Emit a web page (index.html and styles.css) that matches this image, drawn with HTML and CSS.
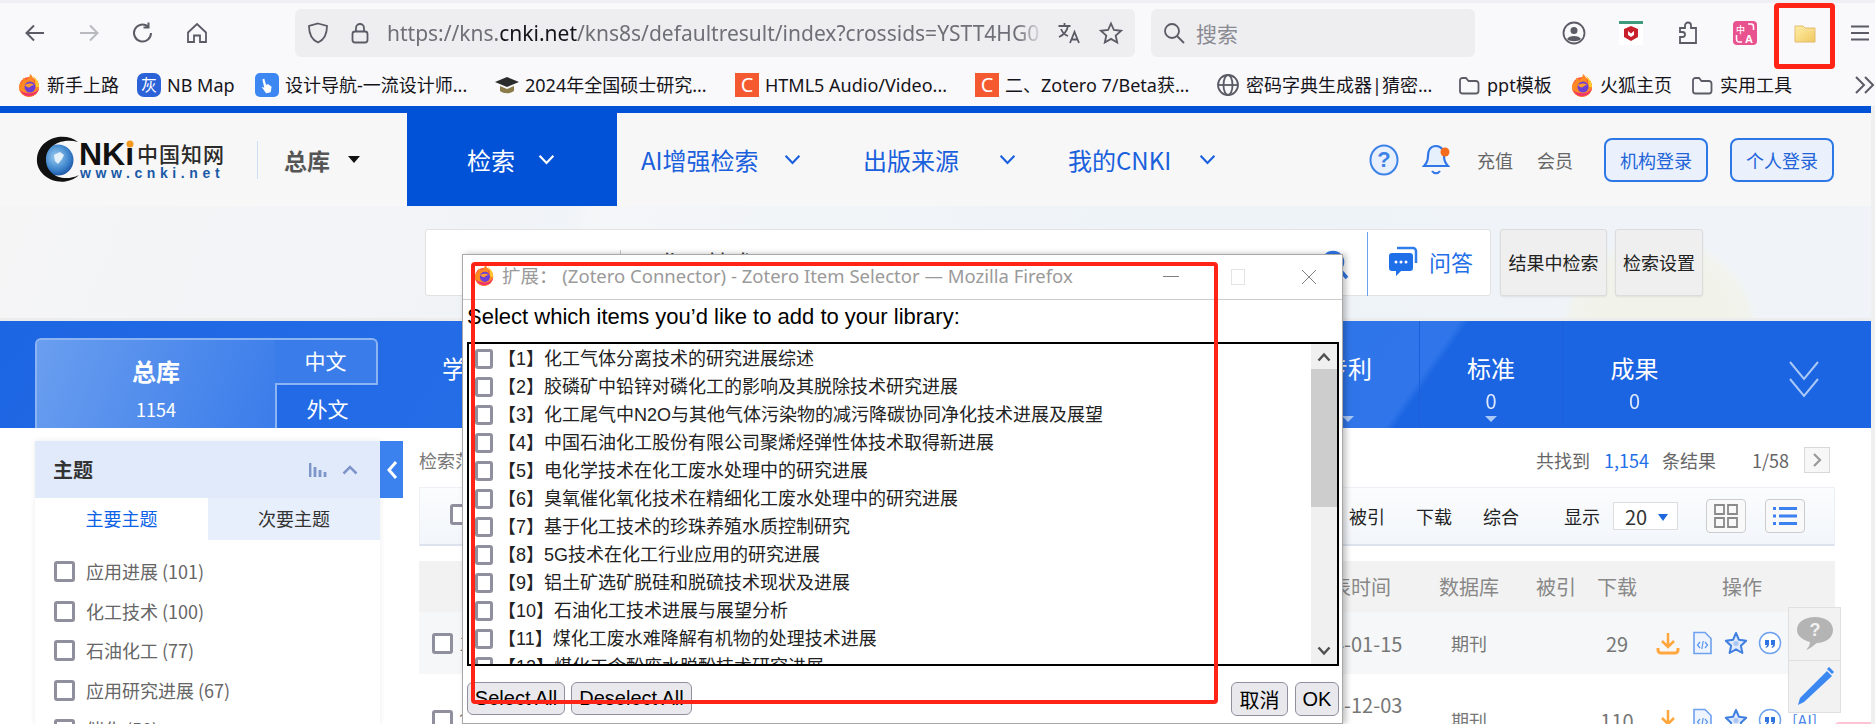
FILE: index.html
```html
<!DOCTYPE html>
<html lang="zh">
<head>
<meta charset="utf-8">
<title>CNKI</title>
<link rel="stylesheet" href="styles.css">
</head>
<body>
<svg class="defs" width="0" height="0">
  <defs>
    <symbol id="fox" viewBox="0 0 24 24">
      <circle cx="12" cy="14" r="10" fill="#ff5a36"/>
      <path d="M2 14a10 10 0 0 0 20 0c0-3-1-5-2-7-1 2-2 3-3 3 0-3-1-7-4-9 0 3-2 5-4 6-1-1-2-2-3-2 0 2 0 3-1 4-2 1-3 3-3 5z" fill="#ff8a24"/>
      <path d="M16 3c3 2 6 6 6 11h-3c0-4-1-8-3-11z" fill="#ffc92e"/>
      <path d="M3 17c2 4 6 7 10 6 4 0 8-3 9-8-2 4-7 6-11 5-3 0-6-1-8-3z" fill="#f0356b"/>
      <circle cx="13" cy="14" r="5.5" fill="#6d3fd6"/>
      <path d="M8 12c3-2 7-2 9 0-2 0-3 1-4 2s-4 0-5-2z" fill="#ff9c2e"/>
    </symbol>
    <symbol id="folder" viewBox="0 0 24 24">
      <path d="M3 7.500A2.500 2.500 0 0 1 5.500 5H9l2.500 3H19a2.500 2.500 0 0 1 2.500 2.500V18a2.500 2.500 0 0 1-2.500 2.500H5.500A2.500 2.500 0 0 1 3 18z" fill="none" stroke="#5b5b66" stroke-width="1.800"/>
    </symbol>
    <symbol id="chev" viewBox="0 0 16 10">
      <path d="M1.500 1.500 8 8.200l6.500-6.700" fill="none" stroke="currentColor" stroke-width="2"/>
    </symbol>
    <symbol id="dl" viewBox="0 0 24 24">
      <path d="M12 2v13M6 10l6 6 6-6" fill="none" stroke="#ffa63d" stroke-width="2.500"/>
      <path d="M2 17v2a3 3 0 0 0 3 3h14a3 3 0 0 0 3-3v-2" fill="none" stroke="#ffa63d" stroke-width="3"/>
    </symbol>
    <symbol id="doc" viewBox="0 0 24 24">
      <path d="M4 1.500h11l6 6v15H4z" fill="#eef4fe" stroke="#6ea1ee" stroke-width="1.600"/>
      <path d="M10 11l-2.500 3 2.500 3M15 11l2.500 3-2.500 3M13.200 10l-1.400 8" fill="none" stroke="#5b95ee" stroke-width="1.200"/>
    </symbol>
    <symbol id="star" viewBox="0 0 24 24">
      <path d="M12 2l3 6.800 7.200.9-5.300 5 1.500 7.300-6.400-3.700L5.600 22l1.500-7.300-5.300-5L9 8.800z" fill="#dfe9fb" stroke="#3f7fe0" stroke-width="2" stroke-linejoin="round"/>
      <circle cx="12" cy="12.500" r="2.500" fill="#a9c5f2"/>
    </symbol>
    <symbol id="quote" viewBox="0 0 24 24">
      <circle cx="12" cy="12" r="10.500" fill="#fff" stroke="#6ea1ee" stroke-width="1.500"/>
      <path d="M7 9h4v4c0 2-1 3-3 4l-.5-1c1-.5 1.500-1.200 1.500-2H7zM13 9h4v4c0 2-1 3-3 4l-.5-1c1-.5 1.500-1.200 1.500-2h-2z" fill="#2f73e0"/>
    </symbol>
  </defs>
</svg>
<div class="app">
  <div class="strip"></div>

  <div class="toolbar">
    <div class="tb-btn"><svg class="i24" viewBox="0 0 24 24"><path d="M21 12H4M11 4.500 3.500 12l7.500 7.500" class="st"/></svg></div>
    <div class="tb-btn"><svg class="i24" viewBox="0 0 24 24"><path d="M3 12h17M13 4.500l7.500 7.500-7.500 7.500" class="st st-dim"/></svg></div>
    <div class="tb-btn"><svg class="i24" viewBox="0 0 24 24"><path d="M20 12a8.500 8.500 0 1 1-3-6.500M17.500 1.500v5h-5" class="st"/></svg></div>
    <div class="tb-btn"><svg class="i24" viewBox="0 0 24 24"><path d="M3 11.500 12 3l9 8.500V21h-6v-6.500H9V21H3z" class="st st-thin"/></svg></div>
    <div class="urlbar">
      <svg class="i24 shield" viewBox="0 0 24 24"><path d="M12 2.500 21 5c0 8-2 13.500-9 16.500C5 18.500 3 13 3 5z" class="st st-thin"/></svg>
      <svg class="i24 lock" viewBox="0 0 24 24"><rect x="4.500" y="10.500" width="15" height="11" rx="2.500" class="st st-thin"/><path d="M8 10.500V7a4 4 0 0 1 8 0v3.500" class="st st-thin"/></svg>
      <div class="url"><span>https://kns.</span><b>cnki.net</b><span>/kns8s/defaultresult/index?crossids=YSTT4HG0</span></div>
      <svg class="i24 trans" viewBox="0 0 24 24"><path d="M1.500 5h12M7.500 2v3M11 5c-1 5-4.500 9-9 11M4 8c1.500 3.500 4 6 7 7" class="st st-thin"/><path d="M13 22l4.500-11L22 22M14.500 18.500h6" class="st st-thin"/></svg>
      <svg class="i24 star-btn" viewBox="0 0 24 24"><path d="M12 2.500l2.900 6.500 7.100.8-5.300 4.700 1.500 7-6.200-3.600-6.200 3.600 1.500-7L2 9.800l7.100-.8z" class="st st-thin"/></svg>
    </div>
    <div class="searchbar">
      <svg class="i24" viewBox="0 0 24 24"><circle cx="10" cy="10" r="7" class="st st-thin"/><path d="M15 15l7 7" class="st st-thin"/></svg>
      <span>搜索</span>
    </div>
    <div class="tb-right">
      <div class="tr-btn"><svg class="i24" viewBox="0 0 24 24"><circle cx="12" cy="12" r="10.500" class="st st-thin"/><circle cx="12" cy="9.500" r="3.500" fill="#5b5b66"/><path d="M5 18c2-4 12-4 14 0-3 3-11 3-14 0z" fill="#5b5b66"/></svg></div>
      <div class="tr-btn"><svg class="i24 mc" viewBox="0 0 24 24"><rect x="0" y="3" width="24" height="21" fill="#fff"/><rect x="0" y="0" width="24" height="3" fill="#3f9b7d"/><path d="M5 8l7-3 7 3v8l-7 4-7-4zM9 10v4l3 2 3-2v-4l-3 2.500z" fill="#c8202c" fill-rule="evenodd"/></svg></div>
      <div class="tr-btn"><svg class="i24" viewBox="0 0 24 24"><path d="M9 4.500a3 3 0 0 1 6 0V7h5v15H4v-6h2.500a2.500 2.500 0 0 0 0-5H4V7h5z" class="st st-thin"/></svg></div>
      <div class="tr-btn"><svg class="i24" viewBox="0 0 24 24"><rect width="24" height="24" rx="4" fill="#e8538f"/><text class="pt-cn" x="3" y="11.500">中</text><text class="pt-a" x="12" y="21.500">A</text><path d="M15 3h3a2.500 2.500 0 0 1 2.500 2.500V9M9 21H6a2.500 2.500 0 0 1-2.500-2.500V14" fill="none" stroke="#fff" stroke-width="1.500"/></svg></div>
      <div class="tr-btn tr-folder"><svg class="i24" viewBox="0 0 24 24"><defs><linearGradient id="fg" x1="0" y1="0" x2="1" y2="1"><stop offset="0" stop-color="#fff0a8"/><stop offset="1" stop-color="#f0c860"/></linearGradient></defs><path d="M2 5h8l2 2h10v14H2z" fill="url(#fg)" stroke="#e2bb6c"/><path d="M2 9h20" stroke="#f6dd94"/></svg></div>
      <div class="tr-btn tr-menu"><svg class="i24" viewBox="0 0 24 24"><path d="M3 5.500h18M3 12h18M3 18.500h18" class="st"/></svg></div>
    </div>
  </div>

  <div class="bookmarks">
    <div class="bm"><svg class="i24"><use href="#fox"/></svg><span>新手上路</span></div>
    <div class="bm"><span class="bi bi-blue">灰</span><span>NB Map</span></div>
    <div class="bm"><span class="bi bi-hand"><svg viewBox="0 0 24 24"><path d="M9 5l2 7 2-1 4 3-1 6-5 1-5-7 3 1-2-9z" fill="#fff"/></svg></span><span>设计导航-一流设计师...</span></div>
    <div class="bm"><svg class="i24" viewBox="0 0 24 24"><path d="M0 9l12-5 12 5-12 5z" fill="#2b2b2b"/><path d="M5 13v5c4 3 10 3 14 0v-5l-7 3z" fill="#8b7b4a"/></svg><span>2024年全国硕士研究...</span></div>
    <div class="bm"><span class="bi bi-c">C</span><span>HTML5 Audio/Video...</span></div>
    <div class="bm"><span class="bi bi-c">C</span><span>二、Zotero 7/Beta获...</span></div>
    <div class="bm"><svg class="i24" viewBox="0 0 24 24"><circle cx="12" cy="12" r="10" class="st st-thin"/><ellipse cx="12" cy="12" rx="4.500" ry="10" class="st st-thin"/><path d="M2 12h20" class="st st-thin"/></svg><span>密码字典生成器|猜密...</span></div>
    <div class="bm"><svg class="i24"><use href="#folder"/></svg><span>ppt模板</span></div>
    <div class="bm"><svg class="i24"><use href="#fox"/></svg><span>火狐主页</span></div>
    <div class="bm"><svg class="i24"><use href="#folder"/></svg><span>实用工具</span></div>
    <div class="bm bm-more"><svg class="i24" viewBox="0 0 24 24"><path d="M3 4l8 8-8 8M12 4l8 8-8 8" class="st"/></svg></div>
  </div>

  <div class="viewport">
    <div class="page">
      <div class="nav">
        <div class="brand">
          <svg class="logo" viewBox="0 0 200 60">
            <defs><radialGradient id="gl" cx=".45" cy=".4" r=".7"><stop offset="0" stop-color="#9fd0f2"/><stop offset=".6" stop-color="#3d84cc"/><stop offset="1" stop-color="#0f3f95"/></radialGradient></defs>
            <circle cx="28" cy="30" r="15.500" fill="url(#gl)"/>
            <path d="M24 25l6-3 4 3-2 4-4 5-3-3z" fill="#e4f1fb"/>
            <path d="M48 12C36 2 10 6 7 28c-2 20 26 32 42 17-16 8-34 0-33-17C17 14 34 8 48 12z" fill="#111"/>
            <text class="lg-nki" x="49" y="35">NKi</text>
            <circle cx="100" cy="14" r="3.500" fill="#f39a1e"/>
            <text class="lg-cn" x="107" y="32">中国知网</text>
            <text class="lg-www" x="50" y="48">www.cnki.net</text>
          </svg>
          <div class="brand-sep"></div>
          <div class="brand-db">总库</div>
          <div class="brand-caret"></div>
        </div>
        <div class="nav-item nav-on"><span>检索</span><svg class="nchev"><use href="#chev"/></svg></div>
        <div class="nav-link nl-ai"><span>AI增强检索</span><svg class="nchev"><use href="#chev"/></svg></div>
        <div class="nav-link nl-pub"><span>出版来源</span><svg class="nchev"><use href="#chev"/></svg></div>
        <div class="nav-link nl-my"><span>我的CNKI</span><svg class="nchev"><use href="#chev"/></svg></div>
        <div class="nav-right">
          <svg class="help" viewBox="0 0 30 32"><ellipse cx="15" cy="16" rx="13.500" ry="14.500" fill="#e9f0fd" stroke="#3d82e6" stroke-width="2"/><text class="help-q" x="15" y="23">?</text></svg>
          <svg class="bell" viewBox="0 0 28 34"><path d="M14 3c-6 0-8 5-8 10 0 6-2 8-4 10h24c-2-2-4-4-4-10 0-5-2-10-8-10z" fill="#e6effc" stroke="#2f76e6" stroke-width="2.200"/><path d="M10 28c2 3 6 3 8 0" fill="none" stroke="#2f76e6" stroke-width="2"/><circle cx="23" cy="9" r="4.500" fill="#f56c1d"/></svg>
          <span class="nr-text nr-a">充值</span>
          <span class="nr-text nr-b">会员</span>
          <span class="login login-a">机构登录</span>
          <span class="login login-b">个人登录</span>
        </div>
      </div>

      <div class="search-band">
        <div class="search-box">
          <div class="sb-field"><span>化工技术</span></div>
          <svg class="sb-mag" viewBox="0 0 28 30"><circle cx="12" cy="12" r="9.500" fill="none" stroke="#2f76e6" stroke-width="3.500"/><path d="M19 20l7 8" stroke="#2f76e6" stroke-width="3.500"/></svg>
          <div class="sb-ask">
            <svg class="ask-ic" viewBox="0 0 30 32"><path d="M9 3h16a3 3 0 0 1 3 3v12" fill="none" stroke="#2f7cec" stroke-width="2.500"/><path d="M4 8h18a3 3 0 0 1 3 3v12a3 3 0 0 1-3 3H13l-5 5v-5H4a3 3 0 0 1-3-3V11a3 3 0 0 1 3-3z" fill="#1f6fe8"/><circle cx="8" cy="17" r="1.500" fill="#fff"/><circle cx="13" cy="17" r="1.500" fill="#fff"/><circle cx="18" cy="17" r="1.500" fill="#fff"/></svg>
            <span>问答</span>
          </div>
        </div>
        <div class="sb-btn sb-btn-a">结果中检索</div>
        <div class="sb-btn sb-btn-b">检索设置</div>
      </div>

      <div class="tab-band">
        <div class="total">
          <div class="total-main"><b>总库</b><span>1154</span></div>
          <div class="total-cn">中文</div>
          <div class="total-en">外文</div>
        </div>
        <div class="tabs">
          <div class="tab"><b>学术期刊</b></div>
          <div class="tab"></div>
          <div class="tab"></div>
          <div class="tab"></div>
          <div class="tab"></div>
          <div class="tab"></div>
          <div class="tab tab-tri"><b>专利</b></div>
          <div class="tab tab-tri"><b>标准</b><span>0</span></div>
          <div class="tab"><b>成果</b><span>0</span></div>
        </div>
        <svg class="more-chev" viewBox="0 0 34 38"><path d="M3 2l14 17L31 2M3 19l14 17 14-17" fill="none" stroke="#a9c8f6" stroke-width="2"/></svg>
      </div>

      <div class="content">
        <aside class="side">
          <div class="side-head">
            <b>主题</b>
            <svg class="bars" viewBox="0 0 18 14"><path d="M1 0v14M6 4v10M11 7v7M16 9v5" stroke="#7d95c8" stroke-width="2.800"/></svg>
            <svg class="up" viewBox="0 0 16 10"><path d="M1.500 8.500 8 2l6.500 6.500" fill="none" stroke="#7d95c8" stroke-width="2.500"/></svg>
          </div>
          <div class="side-tabs"><div class="st-on">主要主题</div><div class="st-off">次要主题</div></div>
          <div class="side-list">
            <div class="side-row"><i class="cb cb-l"></i><span>应用进展 (101)</span></div>
            <div class="side-row"><i class="cb cb-l"></i><span>化工技术 (100)</span></div>
            <div class="side-row"><i class="cb cb-l"></i><span>石油化工 (77)</span></div>
            <div class="side-row"><i class="cb cb-l"></i><span>应用研究进展 (67)</span></div>
            <div class="side-row"><i class="cb cb-l"></i><span>催化 (50)</span></div>
          </div>
        </aside>
        <div class="collapse"><svg viewBox="0 0 12 20"><path d="M10 2 3 10l7 8" fill="none" stroke="#fff" stroke-width="3"/></svg></div>
        <main class="results">
          <div class="res-top">
            <span class="crumb">检索范围：总库</span>
            <span class="found">共找到</span><span class="found-n">1,154</span><span class="found">条结果</span>
            <span class="pg">1/58</span>
            <span class="pg-next"><svg viewBox="0 0 10 16"><path d="M2 2l6 6-6 6" fill="none" stroke="#999" stroke-width="2.200"/></svg></span>
          </div>
          <div class="res-tools">
            <i class="cb cb-l cb-tool"></i>
            <span class="rt rt-first">被引</span><span class="rt">下载</span><span class="rt">综合</span>
            <span class="rt rt-show">显示</span>
            <span class="sel">20<i></i></span>
            <span class="vbtn vbtn-grid"><svg viewBox="0 0 24 24"><path d="M1 1h9v9H1zM14 1h9v9h-9zM1 14h9v9H1zM14 14h9v9h-9z" fill="none" stroke="#8a8a8a" stroke-width="1.800"/></svg></span>
            <span class="vbtn vbtn-list"><svg viewBox="0 0 24 20"><path d="M0 2.500h3M6 2.500h18M0 10h3M6 10h18M0 17.500h3M6 17.500h18" stroke="#3b82f0" stroke-width="3"/></svg></span>
          </div>
          <div class="row row-head">
            <span></span><span></span><span>发表时间</span><span>数据库</span><span>被引</span><span>下载</span><span>操作</span>
          </div>
          <div class="row row-a">
            <i class="cb cb-l cb-row"></i>
            <span class="r-title">1</span><span class="r-date">2024-01-15</span><span>期刊</span><span></span><span class="r-num">29</span>
            <span class="ops">
              <svg class="op"><use href="#dl"/></svg><svg class="op"><use href="#doc"/></svg><svg class="op"><use href="#star"/></svg><svg class="op"><use href="#quote"/></svg>
            </span>
          </div>
          <div class="row row-b">
            <i class="cb cb-l cb-row"></i>
            <span class="r-title">2</span><span class="r-date r-date-top">2023-12-03</span><span>期刊</span><span></span><span class="r-num">110</span>
            <span class="ops">
              <svg class="op"><use href="#dl"/></svg><svg class="op"><use href="#doc"/></svg><svg class="op"><use href="#star"/></svg><svg class="op"><use href="#quote"/></svg><em>[AI]</em>
            </span>
          </div>
        </main>
      </div>
    </div>
    <div class="page-scroll"></div>
  </div>

  <div class="float">
    <div class="fl-cell"><svg viewBox="0 0 40 36"><path d="M20 1c10 0 18 5 18 13s-8 13-16 13c-3 2-7 6-11 7 2-2 4-5 4-8C8 24 2 20 2 14 2 6 10 1 20 1z" fill="#b4b4b4"/><text class="fl-q" x="20" y="20">?</text></svg></div>
    <div class="fl-cell"><svg viewBox="0 0 40 40"><path d="M32 4l5 5L9 35l-6 3 2-7z" fill="#3b88f2"/><path d="M33 1l5 5" stroke="#3b88f2" stroke-width="3"/></svg></div>
  </div>
  <div class="pink-edge"></div>

  <section class="dialog">
    <div class="dlg-title">
      <svg class="dlg-fox"><use href="#fox"/></svg>
      <span class="dlg-name">扩展： (Zotero Connector) - Zotero Item Selector — Mozilla Firefox</span>
      <span class="wc wc-min"></span><span class="wc wc-max"></span>
      <svg class="wc-close" viewBox="0 0 16 16"><path d="M1 1l14 14M15 1 1 15" stroke="#808080"/></svg>
    </div>
    <div class="dlg-body">
      <p class="dlg-q">Select which items you’d like to add to your library:</p>
      <div class="dlg-list">
        <div class="items">
          <label class="item"><i class="cb"></i><span>【1】化工气体分离技术的研究进展综述</span></label>
          <label class="item"><i class="cb"></i><span>【2】胶磷矿中铅锌对磷化工的影响及其脱除技术研究进展</span></label>
          <label class="item"><i class="cb"></i><span>【3】化工尾气中N2O与其他气体污染物的减污降碳协同净化技术进展及展望</span></label>
          <label class="item"><i class="cb"></i><span>【4】中国石油化工股份有限公司聚烯烃弹性体技术取得新进展</span></label>
          <label class="item"><i class="cb"></i><span>【5】电化学技术在化工废水处理中的研究进展</span></label>
          <label class="item"><i class="cb"></i><span>【6】臭氧催化氧化技术在精细化工废水处理中的研究进展</span></label>
          <label class="item"><i class="cb"></i><span>【7】基于化工技术的珍珠养殖水质控制研究</span></label>
          <label class="item"><i class="cb"></i><span>【8】5G技术在化工行业应用的研究进展</span></label>
          <label class="item"><i class="cb"></i><span>【9】铝土矿选矿脱硅和脱硫技术现状及进展</span></label>
          <label class="item"><i class="cb"></i><span>【10】石油化工技术进展与展望分析</span></label>
          <label class="item"><i class="cb"></i><span>【11】煤化工废水难降解有机物的处理技术进展</span></label>
          <label class="item"><i class="cb"></i><span>【12】煤化工含酚废水脱酚技术研究进展</span></label>
        </div>
        <div class="sbar">
          <svg class="sb-arrow" viewBox="0 0 14 10"><path d="M1.500 8.500 7 2.500l5.500 6" fill="none" stroke="#505050" stroke-width="2.500"/></svg>
          <div class="sb-thumb"></div>
          <svg class="sb-arrow sb-arrow-d" viewBox="0 0 14 10"><path d="M1.500 1.500 7 7.500l5.500-6" fill="none" stroke="#505050" stroke-width="2.500"/></svg>
        </div>
      </div>
      <div class="dlg-btns">
        <button class="btn btn-sel">Select All</button>
        <button class="btn btn-des">Deselect All</button>
        <button class="btn btn-cancel">取消</button>
        <button class="btn btn-ok">OK</button>
      </div>
    </div>
  </section>

  <div class="red red-folder"></div>
  <div class="red red-dialog"></div>
</div>
</body>
</html>
```
FILE: styles.css
```css
* { box-sizing: border-box; }
html, body { margin: 0; padding: 0; height: 100%; overflow: hidden; background: #fff; }
body { font-family: "Noto Sans CJK SC", "Noto Sans", sans-serif; color: #333; }
.defs { position: absolute; }
.app { position: relative; width: 1875px; height: 724px; overflow: hidden; }
.i24 { width: 24px; height: 24px; flex: none; display: block; }
.st { fill: none; stroke: #5b5b66; stroke-width: 2; }
.st-thin { stroke-width: 1.800; }
.st-dim { stroke: #b9b9c0; }

.strip { height: 3px; background: #f0f0f4; }
.toolbar { height: 60px; background: #f9f9fb; display: flex; align-items: center; padding-left: 8px; overflow: hidden; }
.tb-btn { width: 54px; display: flex; justify-content: center; flex: none; }
.urlbar { margin-left: 71px; width: 840px; height: 48px; background: #eeeef1; border-radius: 6px; display: flex; align-items: center; position: relative; flex: none; font-family: "Noto Sans", sans-serif; }
.shield { margin-left: 11px; }
.lock { margin-left: 18px; }
.url { margin-left: 15px; width: 657px; overflow: hidden; white-space: nowrap; font-size: 21px; color: #6f6f78; -webkit-mask-image: linear-gradient(90deg, #000 96%, transparent); mask-image: linear-gradient(90deg, #000 96%, transparent); }
.url b { font-weight: 400; color: #15141a; }
.trans { position: absolute; left: 762px; }
.star-btn { position: absolute; left: 804px; }
.searchbar { margin-left: 16px; width: 324px; height: 48px; background: #eeeef1; border-radius: 6px; display: flex; align-items: center; gap: 10px; padding-left: 11px; flex: none; color: #8a8a92; font-size: 21px; }
.tb-right { margin-left: 70px; display: flex; flex: none; align-items: center; }
.tr-btn { width: 57px; display: flex; justify-content: center; flex: none; }
.tr-folder { width: 63px; }
.tr-menu { width: 39px; padding-left: 9px; }
.pt-cn { font: 500 9px "Noto Sans CJK SC", sans-serif; fill: #fff; }
.pt-a { font: 700 11px "Liberation Sans", sans-serif; fill: #fff; }

.bookmarks { height: 43px; background: #f9f9fb; display: grid; grid-template-columns: 120px 118px 240px 240px 240px 241px 241px 113px 120px 165px 20px; padding-left: 17px; align-items: center; font-size: 18px; color: #15141a; white-space: nowrap; font-family: "Noto Sans", "Noto Sans CJK SC", sans-serif; }
.bm { display: flex; align-items: center; gap: 6px; overflow: visible; line-height: 24px; }
.bi { width: 24px; height: 24px; flex: none; display: flex; align-items: center; justify-content: center; color: #fff; font-size: 16px; }
.bi-blue { background: #2b62d8; border-radius: 7px; }
.bi-hand { background: #3d87f2; border-radius: 5px; }
.bi-hand svg { width: 22px; height: 22px; }
.bi-c { background: #f4592f; font-size: 20px; }
.bm-more { margin-left: -2px; }

.viewport { display: flex; height: 618px; }
.page { width: 1871px; flex: none; display: flex; flex-direction: column; }
.page-scroll { width: 4px; background: #efefef; }

.nav { height: 100px; border-top: 7px solid #0252d8; background: #f7f7f7; display: flex; font-size: 24px; color: #1a5fdc; flex: none; }
.brand { width: 407px; flex: none; display: flex; align-items: center; position: relative; padding-left: 30px; }
.logo { width: 200px; height: 60px; flex: none; }
.lg-nki { font: 700 32px "Liberation Sans", sans-serif; fill: #111; }
.lg-cn { font: 500 21px "Noto Sans CJK SC", sans-serif; fill: #2b2b2b; letter-spacing: 1px; }
.lg-www { font: 700 14px "Liberation Sans", sans-serif; fill: #1a5aa8; letter-spacing: 4.600px; }
.brand-sep { width: 1px; height: 38px; background: #cfdff3; margin-left: 27px; flex: none; }
.brand-db { margin-left: 26px; font-weight: 700; color: #555; font-size: 23px; }
.brand-caret { margin-left: 18px; width: 0; height: 0; border: 6px solid transparent; border-top: 7px solid #111; border-bottom: 0; }
.nav-item { width: 210px; flex: none; display: flex; align-items: center; padding-left: 60px; background: #0252d8; color: #fff; margin-top: -7px; padding-top: 7px; }
.nav-item .nchev { margin-left: 23px; }
.nchev { width: 17px; height: 11px; flex: none; }
.nav-link { display: flex; align-items: center; flex: none; }
.nav-link .nchev { margin-left: 25px; }
.nl-ai { margin-left: 24px; width: 222px; }
.nl-pub { width: 205px; }
.nl-pub .nchev { margin-left: 40px; }
.nl-my { width: 200px; }
.nl-my .nchev { margin-left: 28px; }
.nav-right { display: flex; align-items: center; margin-left: auto; padding-right: 37px; font-size: 18px; }
.help { width: 30px; height: 32px; }
.help-q { font: 700 22px "Liberation Sans", sans-serif; fill: #3d82e6; text-anchor: middle; }
.bell { width: 28px; height: 34px; margin-left: 23px; }
.nr-text { font-size: 18px; color: #666; }
.nr-a { margin-left: 27px; }
.nr-b { margin-left: 24px; }
.login { width: 104px; height: 44px; border: 2px solid #2d78e6; border-radius: 8px; background: #eaf1fd; display: flex; align-items: center; justify-content: center; font-size: 18px; color: #2264d8; }
.login-a { margin-left: 31px; }
.login-b { margin-left: 22px; }

.search-band { height: 115px; flex: none; padding: 23px 0 0 425px; display: flex; align-items: flex-start; background: radial-gradient(circle at 1660px 130px, #f1f3e9 0, #f1f3ec 90px, transparent 100px), linear-gradient(110deg, #f5f5f6 0, #f0f3f7 30%, #f4f6f8 31%, #eef3f8 60%, #f0f4f8 100%); border-bottom: 3px solid #ececec; }
.search-box { position: relative; width: 1066px; height: 67px; background: #fff; border: 1px solid #e2e2e2; border-radius: 3px; display: flex; align-items: center; flex: none; }
.sb-field { margin-left: 194px; height: 26px; padding-left: 38px; border-left: 1px solid #ccc; font-size: 24px; line-height: 26px; color: #333; display: flex; align-items: center; }
.sb-mag { position: absolute; left: 895px; top: 20px; width: 28px; height: 30px; }
.sb-ask { position: absolute; left: 941px; top: 2px; height: 64px; width: 124px; border-left: 1px solid #6aa0ee; display: flex; align-items: center; gap: 11px; padding: 0 0 6px 20px; color: #1f6fe8; font-size: 22px; }
.ask-ic { width: 30px; height: 32px; flex: none; }
.sb-btn { height: 67px; background: #efefef; border: 1px solid #dcdcdc; border-radius: 3px; display: flex; align-items: center; justify-content: center; font-size: 18px; color: #222; flex: none; box-shadow: 0 1px 2px rgba(0,0,0,.08); padding-bottom: 2px; }
.sb-btn-a { width: 107px; margin-left: 9px; }
.sb-btn-b { width: 88px; margin-left: 8px; }

.tab-band { height: 107px; flex: none; position: relative; display: flex; align-items: flex-end; padding-left: 35px; color: #fff; background: linear-gradient(125deg, #1d66e3 0, #2b72ea 45%, #3076ea 75%, #1b65e2 75.500%, #1b65e2 100%); }
.total { width: 343px; height: 90px; display: grid; grid-template-columns: 240px 103px; grid-template-rows: 47px 43px; flex: none; }
.total-main { grid-row: 1 / 3; background: linear-gradient(110deg, #6a9eef, #3a7cea); border: 2px solid #8cb4f2; border-width: 2px 0 0 2px; border-radius: 6px 0 0 0; display: flex; flex-direction: column; align-items: center; padding: 12px 0 0 0; }
.total-main b { font-size: 24px; line-height: 38px; }
.total-main span { font-size: 18px; line-height: 34px; margin-top: 2px; }
.total-cn { background: #3a7cea; border: solid #8cb4f2; border-width: 2px 2px 2px 0; border-radius: 0 6px 0 0; display: flex; align-items: center; justify-content: center; font-size: 21px; padding-bottom: 4px; }
.total-en { border-left: 2px solid #8cb4f2; display: flex; align-items: center; justify-content: center; font-size: 21px; padding-top: 3px; }
.tabs { display: flex; margin-left: 41px; flex: none; height: 107px; }
.tab { width: 143px; flex: none; display: flex; flex-direction: column; align-items: center; padding-top: 28px; position: relative; border-right: 1px solid #1c5fd8; }
.tab:last-child { border-right: 0; }
.tab b { font-weight: 400; font-size: 24px; line-height: 38px; }
.tab span { font-size: 20px; line-height: 26px; margin-top: 1px; opacity: .85; }
.tab-tri::after { content: ""; position: absolute; top: 95px; border: 6px solid transparent; border-top: 6px solid #a9c8f6; border-bottom: 0; }
.more-chev { position: absolute; left: 1787px; top: 39px; width: 34px; height: 38px; }

.content { display: flex; flex: 1; min-height: 0; padding: 13px 0 0 35px; }
.side { width: 345px; flex: none; box-shadow: 0 0 6px rgba(0,0,0,.08); }
.side-head { height: 57px; background: #e0eafb; display: flex; align-items: center; padding: 0 22px 0 18px; }
.side-head b { font-size: 20px; color: #333; margin-right: auto; }
.bars { width: 18px; height: 14px; }
.up { width: 16px; height: 10px; margin-left: 15px; }
.side-tabs { display: flex; height: 42px; font-size: 18px; }
.st-on { width: 173px; color: #0b62e6; display: flex; align-items: center; justify-content: center; padding-bottom: 2px; }
.st-off { flex: 1; background: #e7effc; display: flex; align-items: center; justify-content: center; color: #333; padding-bottom: 2px; }
.side-list { padding: 21px 0 0 19px; }
.side-row { height: 39.500px; display: flex; align-items: flex-start; gap: 11px; font-size: 18px; line-height: 21px; color: #666; }
.cb { display: block; width: 18px; height: 20px; border: 3px solid #8f8f9d; border-radius: 3px; background: #fff; flex: none; }
.cb-l { width: 21px; height: 21px; }
.collapse { width: 23px; height: 57px; background: #3b82ee; flex: none; display: flex; align-items: center; justify-content: center; }
.collapse svg { width: 12px; height: 20px; }

.results { width: 1416px; margin-left: 16px; flex: none; font-size: 18px; }
.res-top { height: 46px; display: flex; align-items: center; color: #666; padding-bottom: 8px; }
.crumb { width: 1117px; flex: none; font-size: 18px; color: #777; }
.found-n { color: #1f6fe8; margin: 0 13px 0 14px; }
.pg { margin-left: 36px; }
.pg-next { margin-left: 15px; width: 26px; height: 26px; border: 1px solid #d8d8d8; background: #f7f7f7; display: flex; align-items: center; justify-content: center; }
.pg-next svg { width: 10px; height: 16px; }
.res-tools { height: 59px; border: 1px solid #eef0f5; border-bottom: 2px solid #dde3ee; background: linear-gradient(#fbfcfd, #f2f6fb); display: flex; align-items: center; padding-left: 30px; position: relative; }
.cb-tool { margin-top: -3px; }
.rt { color: #222; margin-left: 31px; }
.rt-first { margin-left: 878px; }
.rt-show { margin-left: 45px; }
.sel { margin-left: 13px; width: 65px; height: 28px; background: #fff; border: 1px solid #ddd; display: flex; align-items: center; padding-left: 11px; color: #333; font-size: 20px; position: relative; }
.sel i { position: absolute; right: 9px; top: 11px; border: 5px solid transparent; border-top: 7px solid #1f66dd; border-bottom: 0; }
.vbtn { width: 40px; height: 34px; border: 1px solid #ccc; border-radius: 4px; background: #f9f9f9; display: flex; align-items: center; justify-content: center; }
.vbtn svg { width: 24px; height: 24px; }
.vbtn-grid { margin-left: 28px; }
.vbtn-list { margin-left: 19px; }
.vbtn-list svg { height: 20px; }
.row { display: grid; grid-template-columns: 40px 832px 120px 116px 58px 64px 186px; align-items: center; justify-items: center; color: #777; }
.row-head { margin-top: 15px; height: 51px; background: #f2f2f2; font-size: 20px; color: #888; }
.row-a { height: 62px; background: #f6f7f9; }
.row-b { height: 92px; background: #fff; }
.cb-row { justify-self: end; margin-right: 6px; }
.r-title { justify-self: start; }
.r-date { font-size: 20px; }
.r-num { font-size: 20px; }
.r-date-top { align-self: start; margin-top: 16px; }
.ops { justify-self: start; display: flex; gap: 10px; padding-left: 7px; align-items: center; }
.op { width: 24px; height: 24px; flex: none; }
.ops em { font-style: normal; color: #4a86e8; font-size: 16px; margin-left: 0; }

.float { position: absolute; left: 1788px; top: 607px; width: 53px; height: 106px; background: #f2f2f2; border: 1px solid #e0e0e0; }
.fl-cell { height: 52px; display: flex; align-items: center; justify-content: center; }
.fl-cell + .fl-cell { border-top: 1px solid #e0e0e0; }
.fl-cell svg { width: 40px; height: 40px; }
.fl-q { font: 700 18px "Liberation Sans", sans-serif; fill: #f2f2f2; text-anchor: middle; }
.pink-edge { position: absolute; left: 1835px; top: 722px; width: 36px; height: 4px; background: #ffc4d4; border-radius: 6px 0 0 0; }

.dialog { position: absolute; left: 462px; top: 254px; width: 881px; height: 470px; background: #fff; border: 1px solid #a8a8a8; box-shadow: 3px 0 6px rgba(0,0,0,.25); display: flex; flex-direction: column; font-family: "Liberation Sans", "Noto Sans CJK SC", sans-serif; color: #000; }
.dlg-title { height: 45px; flex: none; border-bottom: 1px solid #ccc; display: flex; align-items: center; position: relative; padding: 0 0 4px 10px; }
.dlg-fox { width: 22px; height: 24px; flex: none; }
.dlg-name { margin-left: 7px; font: 18.500px "Noto Sans", "Noto Sans CJK SC", sans-serif; color: #9a9a9a; white-space: pre; }
.wc { position: absolute; }
.wc-min { left: 700px; top: 21px; width: 16px; height: 1px; background: #808080; }
.wc-max { left: 768px; top: 14px; width: 14px; height: 16px; border: 1px solid #e4e4e4; }
.wc-close { position: absolute; left: 838px; top: 14px; width: 16px; height: 16px; }
.dlg-body { padding: 0 3px 0 4px; }
.dlg-q { margin: 0; height: 42px; font-size: 22px; line-height: 34px; white-space: nowrap; }
.dlg-list { height: 324px; border: 2px solid #000; display: flex; overflow: hidden; }
.items { flex: 1; padding-top: 1px; min-width: 0; }
.item { height: 28px; display: flex; align-items: center; padding-left: 6px; gap: 5px; font-size: 18px; line-height: 28px; color: #222; white-space: nowrap; }
.sbar { width: 26px; background: #f0f0f0; flex: none; display: flex; flex-direction: column; position: relative; }
.sb-arrow { width: 14px; height: 10px; margin: 8px auto 0; flex: none; }
.sb-thumb { height: 138px; background: #cdcdcd; margin-top: 7px; flex: none; }
.sb-arrow-d { margin: auto auto 8px; }
.dlg-btns { display: flex; padding-top: 16px; align-items: flex-start; }
.btn { height: 33px; padding: 0; background: #e9e9ed; border: 1px solid #8f8f9d; border-radius: 6px; font: 20px "Liberation Sans", "Noto Sans CJK SC", sans-serif; color: #000; flex: none; white-space: nowrap; }
.btn-sel { width: 98px; }
.btn-des { width: 121px; margin-left: 6px; }
.btn-cancel { width: 57px; margin-left: 539px; height: 34px; }
.btn-ok { width: 44px; margin-left: 7px; height: 34px; }

.red { position: absolute; border: 4px solid #ff2415; border-radius: 4px; pointer-events: none; }
.red-folder { left: 1774px; top: 3px; width: 61px; height: 66px; border-width: 5px; }
.red-dialog { left: 471px; top: 262px; width: 747px; height: 442px; }
```
